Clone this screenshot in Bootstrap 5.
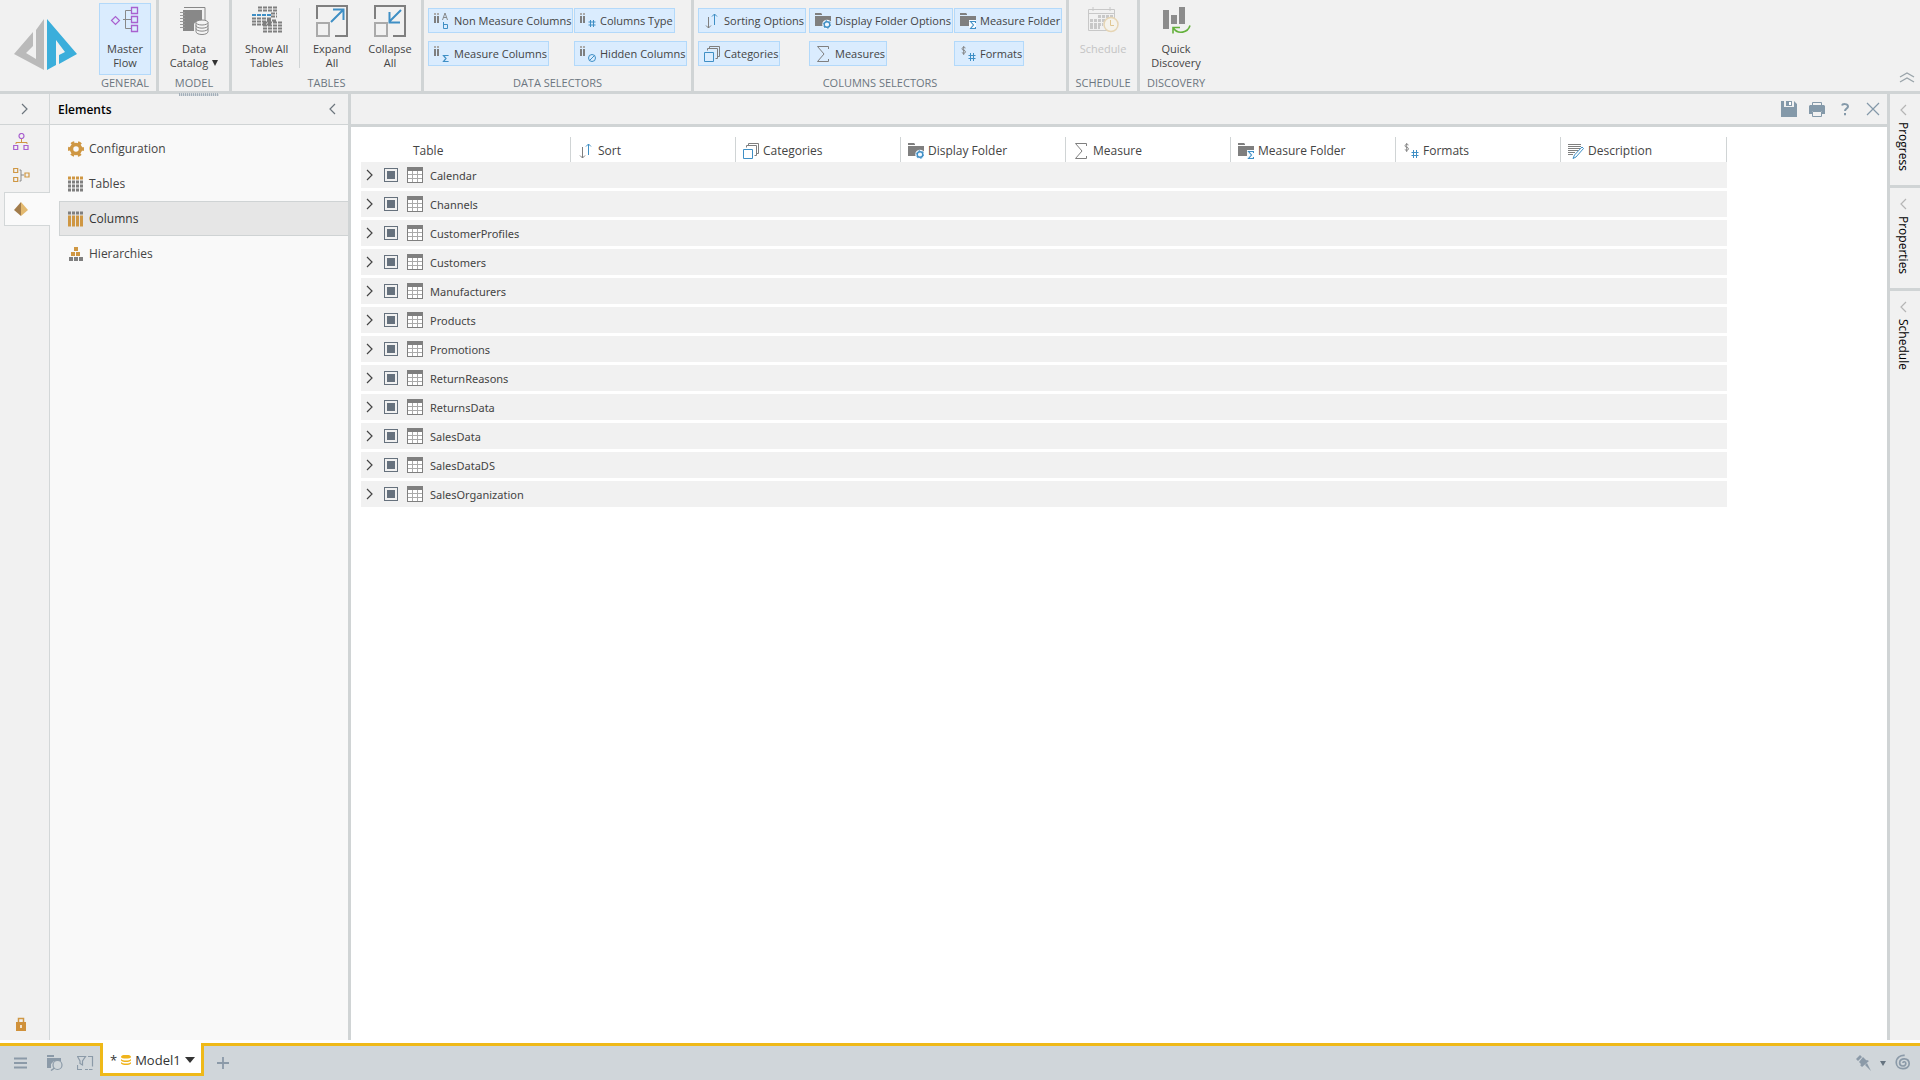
<!DOCTYPE html>
<html lang="en">
<head>
<meta charset="utf-8">
<meta name="viewport" content="width=device-width, initial-scale=1">
<title>Model1</title>
<link href="https://cdn.jsdelivr.net/npm/bootstrap@5.3.0/dist/css/bootstrap.min.css" rel="stylesheet">
<style>
  :root { --line: #d0d4d5; --panel: #f1f1f1; --grey: #7f7f7f; --blue: #3f8fc5; --gold: #cf9743; --slate: #8b9aa8; }
  body { font-family: "Open Sans", "Noto Sans", sans-serif; font-size: 12px; line-height: 14px; color: #444; background: #fff; }
  button { font: inherit; color: inherit; background: none; border: 0; padding: 0; }
  svg { display: block; flex: none; }
  a { color: inherit; text-decoration: none; }

  /* ribbon */
  .ribbon { background: var(--panel); border-bottom: 3px solid var(--line); height: 94px; font-size: 11px; }
  .ribbon-group { border-right: 3px solid var(--line); padding: 3px 5px 0; }
  .ribbon-group:last-of-type { border-right: 0; }
  .group-caption { color: #6c7680; height: 14px; margin-top: auto; margin-bottom: 1px; white-space: nowrap; }
  .brand-box { width: 94px; }
  .g-general { width: 65px; } .g-model { width: 73px; } .g-tables { width: 192px; }
  .g-data { width: 270px; } .g-columns { width: 375px; } .g-schedule { width: 71px; } .g-discovery { width: 72px; }
  .tool { min-width: 52px; height: 72px; border: 1px solid transparent; padding-top: 1px; white-space: nowrap; }
  .tool svg { margin-bottom: 5px; }
  .tool.on, .chip { background: #daecfe; border: 1px solid #b3d9fa; }
  .tool:disabled { color: #c4c4c4; }
  .tool-row { padding-left: 3px; }
  .tool-sep { width: 1px; height: 60px; background: var(--line); margin-top: 5px; }
  .chips { display: grid; gap: 8px 3px; justify-items: start; justify-content: start; padding-top: 5px; }
  .chips-2 { grid-template-columns: 143px auto; margin-left: -1px; }
  .chips-3 { grid-template-columns: 108px 142px auto; margin-left: -1px; }
  .chip { display: flex; align-items: center; gap: 4px; height: 25px; padding: 0 1px 0 5px; white-space: nowrap; }

  /* work area */
  .side-rail { width: 50px; background: var(--panel); border-right: 1px solid #d3d7d8; }
  .side-rail .rail-head { height: 31px; border-bottom: 1px solid var(--line); }
  .rail-btn { height: 33px; width: 42px; }
  .rail-tab { margin: 1px -1px 0 4px; height: 34px; padding-left: 9px; background: #fafafa; border: 1px solid #d3d7d8; border-right: 0; }
  .elements { width: 301px; background: #f9f9f9; border-right: 3px solid var(--line); }
  .elements-head { height: 31px; background: var(--panel); border-bottom: 1px solid var(--line); padding: 0 12px 0 8px; }
  .elements-head h1 { font-size: 12px; line-height: 14px; font-weight: 600; color: #000; padding-top: 2px; }
  .element-list { padding-top: 6px; }
  .element-link { height: 35px; margin-left: 9px; padding-left: 8px; gap: 5px; border: 1px solid transparent; border-right: 0; }
  .element-link.active { background: #e6e6e6; border-color: #cfd3d4; font-weight: 500; color: #333; }
  .main-head { height: 33px; background: var(--panel); border-bottom: 3px solid var(--line); padding-right: 6px; gap: 12px; }
  .main-head button { width: 16px; }
  .grid-wrap { padding: 10px 0 0 10px; }

  .model-grid { border-collapse: separate; border-spacing: 0; table-layout: fixed; width: 1366px; }
  .model-grid th { height: 25px; padding: 0 0 0 7px; border-right: 1px solid var(--line); font-weight: 500; vertical-align: middle; }
  .model-grid th:first-child { width: 210px; padding-left: 52px; }
  .model-grid th:last-child { width: 166px; }
  .model-grid th span { display: flex; align-items: center; gap: 4px; padding-top: 2px; }
  .model-grid td { height: 29px; padding: 0; background: var(--panel); border-bottom: 3px solid #fff; font-family: "Noto Sans", sans-serif; font-size: 11px; }
  .cell { display: flex; align-items: center; height: 26px; padding-left: 5px; }
  .cell input { appearance: none; width: 14px; height: 14px; margin: 0 9px 0 11px; border: 1px solid #66717d; padding: 2px; background: #66717d content-box; flex: none; }
  .cell label { margin-left: 7px; padding-top: 1px; }

  .dock { width: 33px; background: var(--panel); border-left: 3px solid var(--line); color: #000; }
  .dock-tab { border-bottom: 3px solid var(--line); padding: 10px 4px 0 0; gap: 6px; }
  .dock-tab:last-child { border-bottom: 0; }
  .dock-tab svg { color: #b5b5b5; }
  .dock-tab span { writing-mode: vertical-rl; font-weight: 500; line-height: 16px; }
  .h-94 { height: 94px; } .h-103 { height: 103px; }

  /* bottom bar */
  .tabs-bar { height: 37px; background: #d0d6da; border-top: 3px solid #efb918; margin-top: 3px; }
  .bar-tools { width: 100px; padding-left: 14px; gap: 14px; }
  .doc-tab { height: 33px; margin-top: -3px; background: #fff; border: 3px solid #efb918; border-top: 0; color: #333; padding: 3px 6px 0 7px; width: 104px; font-size: 13px; }
  .drag-grip { left: 179px; top: 93px; width: 40px; height: 3px; background: repeating-linear-gradient(90deg, #a4b0ba 0 1px, #d8dcdf 1px 2px); }
</style>
</head>
<body class="vh-100 d-flex flex-column overflow-hidden">

<svg width="0" height="0" class="position-absolute" aria-hidden="true">
  <symbol id="i-right" viewBox="0 0 7 12"><path d="M1 1l5 5-5 5" fill="none" stroke="currentColor" stroke-width="1.2"/></symbol>
  <symbol id="i-left" viewBox="0 0 7 12"><path d="M6 1L1 6l5 5" fill="none" stroke="currentColor" stroke-width="1.2"/></symbol>
  <symbol id="i-grid" viewBox="0 0 16 16"><path d="M0 0h16v16H0z" fill="#7f7f7f"/><path d="M1 4h14v11H1z" fill="#fff"/><path d="M5.500 4v11M10.500 4v11M1 7.500h14M1 11.500h14" stroke="#aaa"/></symbol>
  <symbol id="i-sort" viewBox="0 0 16 16"><path d="M4.500 4v11M2 12.500l2.500 2.500 2.500-2.500" fill="none" stroke="#7f7f7f"/><path d="M10.500 12V1M8 3.500L10.500 1 13 3.500" fill="none" stroke="#3f8fc5"/></symbol>
  <symbol id="i-cat" viewBox="0 0 16 16"><path d="M5.500 2.500v-2h10v10h-2M3.500 4.500v-2h10v10h-2" fill="none" stroke="#7f7f7f"/><path d="M.5 6.500h9v9h-9z" fill="none" stroke="#3f8fc5"/></symbol>
  <symbol id="i-fgear" viewBox="0 0 16 16"><path d="M0 0h6l1 1v1H0zM0 3h16v10H0z" fill="#7f7f7f"/><circle cx="12" cy="11.500" r="4.800" fill="#f0f7ff"/><circle cx="12" cy="11.500" r="2.800" fill="none" stroke="#3f8fc5" stroke-width="1.400"/><circle cx="12" cy="11.500" r="3.800" fill="none" stroke="#3f8fc5" stroke-dasharray="1.500 2.480"/></symbol>
  <symbol id="i-fsum" viewBox="0 0 16 16"><path d="M0 0h6l1 1v1H0zM0 3h16v10H0z" fill="#7f7f7f"/><path d="M9 7h7v9H9z" fill="#f7fbff"/><path d="M15.500 10V8.500h-5l3 3.500-3 3.500h5V14" fill="none" stroke="#3f8fc5" stroke-width="1.100"/></symbol>
  <symbol id="i-sum" viewBox="0 0 16 16"><path d="M13.500 3V.5h-11L9 8l-6.500 7.500h11V13" fill="none" stroke="#7f7f7f"/></symbol>
  <symbol id="i-fmt" viewBox="0 0 16 16"><path d="M5.500 2C4.500 1 2 1 2 2.800c0 2 3.500 1 3.500 3C5.500 7.500 3 7.800 1.800 6.500M3.700 0v9" fill="none" stroke="#7f7f7f" stroke-width=".9"/><path d="M10.500 7v8M13.500 7v8M8.500 9.500h7M8.500 12.500h7" stroke="#3f8fc5"/></symbol>
  <symbol id="i-ii" viewBox="0 0 16 16"><path d="M0 0h2v2H0zM3 0h2v2H3z" fill="#aaa"/><path d="M0 3h2v7H0zM3 3h2v7H3z" fill="#7f7f7f"/></symbol>
  <symbol id="i-desc" viewBox="0 0 16 16"><path d="M0 1.500h13M0 3.500h13M0 5.500h12M0 7.500h10M0 9.500h7M0 11.500h5" stroke="#7f7f7f"/><path d="M14 4l1.500 1.500L8 14l-3 1.500L6.500 12z" fill="#fff" stroke="#3f8fc5"/></symbol>
</svg>

<header class="ribbon d-flex flex-shrink-0">
  <a href="#" class="brand-box ribbon-group" aria-label="Home">
    <svg width="84" height="80" viewBox="5 3 84 80"><path d="M44 19v51L14 54l19-22v14l-7 7 10 6V30z" fill="#bababa"/><path d="M47 19l30 35-18 10v-9l6-3-9-12v25l-9 5z" fill="#3baedb"/></svg>
  </a>
  <section class="ribbon-group g-general d-flex flex-column align-items-center">
    <button class="tool on d-flex flex-column align-items-center"><svg width="30" height="32" viewBox="0 0 30 32"><path d="M1.500 15.500l4-4 4 4-4 4z" fill="none" stroke="#a960cf" stroke-width="1.200"/><path d="M21 5.500h-5.500v18H21M13 14.500h8" fill="none" stroke="#888"/><path d="M21.500 2.500h6v6h-6zM21.500 11.500h6v6h-6zM21.500 20.500h6v6h-6z" fill="none" stroke="#a960cf" stroke-width="1.300"/></svg>Master<br>Flow</button>
    <div class="group-caption">GENERAL</div>
  </section>
  <section class="ribbon-group g-model d-flex flex-column align-items-center">
    <button class="tool d-flex flex-column align-items-center"><svg width="30" height="32" viewBox="0 0 30 32"><path d="M5 2.500h21v19" fill="none" stroke="#888"/><path d="M4 5h19v11c-5 0-8 1-8 4v6H4z" fill="#888"/><path d="M1 7.500h5M1 10.500h5M1 13.500h5M1 16.500h5M1 19.500h5M1 22.500h5" stroke="#999"/><path d="M17 17.500v9c0 4 12 4 12 0v-9" fill="#f4f4f4" stroke="#888"/><ellipse cx="23" cy="17.500" rx="6" ry="2.500" fill="#f4f4f4" stroke="#888"/><path d="M17 20.500c0 3.500 12 3.500 12 0M17 23.500c0 3.500 12 3.500 12 0" fill="none" stroke="#888"/></svg><span>Data</span><span class="d-flex align-items-center">Catalog<svg class="m-0 ms-1" width="6" height="6"><path d="M0 0h6L3 6z" fill="#333"/></svg></span></button>
    <div class="group-caption">MODEL</div>
  </section>
  <section class="ribbon-group g-tables d-flex flex-column align-items-center">
    <div class="tool-row d-flex w-100 justify-content-between">
      <button class="tool d-flex flex-column align-items-center px-1"><svg width="32" height="32" viewBox="0 0 32 32"><path d="M7 2.500h19M7 5.500h19M16 15.500h10M1 13.500h19M1 16.500h19M1 19.500h19M20 8.500h6M20 11.500h6M12 17.500h19M12 20.500h19M12 23.500h19M12 26.500h19" stroke="#7f7f7f" stroke-width="2" stroke-dasharray="4 1"/><path d="M1 10h19" stroke="#3f8fc5" stroke-width="2" stroke-dasharray="4 1"/></svg>Show All<br>Tables</button>
      <div class="tool-sep"></div>
      <button class="tool d-flex flex-column align-items-center"><svg width="32" height="32" viewBox="0 0 32 32"><path d="M1 14V1h30v30H19" fill="none" stroke="#7f7f7f" stroke-width="2"/><path d="M1 18h12v13H1z" fill="none" stroke="#aaa" stroke-width="2"/><path d="M15 17L27 5M17 4.500h10.500V15" fill="none" stroke="#3f8fc5" stroke-width="2"/></svg>Expand<br>All</button>
      <button class="tool d-flex flex-column align-items-center"><svg width="32" height="32" viewBox="0 0 32 32"><path d="M1 14V1h30v30H19" fill="none" stroke="#7f7f7f" stroke-width="2"/><path d="M1 18h12v13H1z" fill="none" stroke="#aaa" stroke-width="2"/><path d="M27 5L15 17M15.500 7v10.500H26" fill="none" stroke="#3f8fc5" stroke-width="2"/></svg>Collapse<br>All</button>
    </div>
    <div class="group-caption">TABLES</div>
  </section>
  <section class="ribbon-group g-data d-flex flex-column">
    <div class="chips chips-2">
      <button class="chip"><svg width="16" height="16"><use href="#i-ii"/><path d="M8.500 7L11 0l2.500 7M9.500 4.500h3" fill="none" stroke="#7f7f7f" stroke-width=".9"/><path d="M9.500 9v6.500h4v-4h-4" fill="none" stroke="#3f8fc5"/></svg>Non Measure Columns</button>
      <button class="chip"><svg width="16" height="16"><use href="#i-ii"/><path d="M10.500 7v7M13.500 7v7M8.500 9h7M8.500 12h7" stroke="#3f8fc5"/></svg>Columns Type</button>
      <button class="chip"><svg width="16" height="16"><use href="#i-ii"/><path d="M14 10V9.500H9.500l2.500 3-2.500 3H14V15" fill="none" stroke="#3f8fc5" stroke-width="1.200"/></svg>Measure Columns</button>
      <button class="chip"><svg width="16" height="16"><use href="#i-ii"/><circle cx="12" cy="12" r="3.500" fill="none" stroke="#3f8fc5"/><path d="M9.500 14.500l5-5" stroke="#3f8fc5"/></svg>Hidden Columns</button>
    </div>
    <div class="group-caption text-center">DATA SELECTORS</div>
  </section>
  <section class="ribbon-group g-columns d-flex flex-column">
    <div class="chips chips-3">
      <button class="chip"><svg width="16" height="16"><use href="#i-sort"/></svg>Sorting Options</button>
      <button class="chip"><svg width="16" height="16"><use href="#i-fgear"/></svg>Display Folder Options</button>
      <button class="chip"><svg width="16" height="16"><use href="#i-fsum"/></svg>Measure Folder</button>
      <button class="chip"><svg width="16" height="16"><use href="#i-cat"/></svg>Categories</button>
      <button class="chip"><svg width="16" height="16"><use href="#i-sum"/></svg>Measures</button>
      <button class="chip"><svg width="16" height="16"><use href="#i-fmt"/></svg>Formats</button>
    </div>
    <div class="group-caption text-center">COLUMNS SELECTORS</div>
  </section>
  <section class="ribbon-group g-schedule d-flex flex-column align-items-center">
    <button class="tool d-flex flex-column align-items-center" disabled><svg width="32" height="32" viewBox="0 0 32 32"><path d="M1.500 4.500h26v21h-26zM1.500 8.500h26M6 2v4M23 2v4" fill="none" stroke="#c8c8c8"/><path d="M11 11.500h15M3 15.500h23M3 19.500h13M3 22.500h10" stroke="#c8c8c8" stroke-width="3" stroke-dasharray="3 1"/><circle cx="24" cy="19.500" r="7" fill="#f5f3ec" stroke="#e6d5b4" stroke-width="1.500"/><path d="M23.500 15v5.500H27" fill="none" stroke="#e0c692"/></svg>Schedule</button>
    <div class="group-caption">SCHEDULE</div>
  </section>
  <section class="ribbon-group g-discovery d-flex flex-column align-items-center">
    <button class="tool d-flex flex-column align-items-center"><svg width="30" height="32" viewBox="0 0 30 32"><path d="M2 5h6v19H2zM10 10h6v9h-6zM18 2h6v17h-6z" fill="#8c8c8c"/><path d="M12 28.500v-6h7M12 22.500c5 8 15 5 17-2" fill="none" stroke="#64b13c" stroke-width="1.600"/></svg>Quick<br>Discovery</button>
    <div class="group-caption">DISCOVERY</div>
  </section>
  <button class="ms-auto mt-auto me-1 pb-2" aria-label="Collapse ribbon"><svg width="18" height="12"><path d="M2 6l7-4 7 4M2 11l7-4 7 4" fill="none" stroke="#9aa4aa" stroke-width="1.400"/></svg></button>
</header>
<div class="drag-grip position-absolute"></div>

<main class="d-flex flex-grow-1 overflow-hidden">
  <nav class="side-rail d-flex flex-column flex-shrink-0" aria-label="Views">
    <button class="rail-head d-flex align-items-center justify-content-center" aria-label="Expand"><svg width="7" height="12" class="text-secondary"><use href="#i-right"/></svg></button>
    <button class="rail-btn d-flex align-items-center justify-content-center" aria-label="Flow"><svg width="16" height="17"><circle cx="8.500" cy="3" r="2.500" fill="none" stroke="#a960cf" stroke-width="1.200"/><path d="M3 11V9.500h11V11M8.500 6v3" fill="none" stroke="#cf9743"/><path d="M.7 12.500h4v4h-4zM11 12.500h4v4h-4z" fill="none" stroke="#a960cf" stroke-width="1.200"/></svg></button>
    <button class="rail-btn d-flex align-items-center justify-content-center" aria-label="Joins"><svg width="17" height="16"><path d="M.7 1.500h4v4h-4zM.7 10.500h4v4h-4zM12 6h4v4h-4z" fill="none" stroke="#cf9743" stroke-width="1.200"/><path d="M6.500 3H8v11H6.500M8 8h3" fill="none" stroke="#888"/></svg></button>
    <button class="rail-tab d-flex align-items-center" aria-label="Model"><svg width="14" height="14"><path d="M7 0v14L0 8z" fill="#a27c4b"/><path d="M7 0l7 8-7 6z" fill="#e3b96f"/></svg></button>
    <button class="rail-btn mt-auto d-flex align-items-center justify-content-center" aria-label="Lock"><svg width="10" height="14"><path d="M2.500 6V1.500h5V6" fill="none" stroke="#cf9743" stroke-width="1.500"/><path d="M0 5h10v9H0z" fill="#d0913a"/><path d="M5 8v3" stroke="#fff" stroke-width="1.500"/></svg></button>
  </nav>

  <aside class="elements flex-shrink-0">
    <div class="elements-head d-flex align-items-center justify-content-between"><h1 class="m-0">Elements</h1><button aria-label="Collapse"><svg width="7" height="12" class="text-secondary"><use href="#i-left"/></svg></button></div>
    <nav class="element-list" aria-label="Elements">
      <a href="#" class="element-link d-flex align-items-center"><svg width="16" height="16"><circle cx="8" cy="8" r="4.500" fill="none" stroke="#cf9743" stroke-width="3.500"/><circle cx="8" cy="8" r="6.800" fill="none" stroke="#cf9743" stroke-width="2.400" stroke-dasharray="3.500 3.620" stroke-dashoffset="-1.800" transform="rotate(-30 8 8)"/></svg>Configuration</a>
      <a href="#" class="element-link d-flex align-items-center"><svg width="16" height="16"><path d="M0 2h16" stroke="#cf9743" stroke-width="3" stroke-dasharray="3 1"/><path d="M0 6h16M0 10h16M0 14h16" stroke="#7f7f7f" stroke-width="3" stroke-dasharray="3 1"/></svg>Tables</a>
      <a href="#" class="element-link active d-flex align-items-center"><svg width="16" height="16"><path d="M0 2h16" stroke="#7f7f7f" stroke-width="3" stroke-dasharray="3 1"/><path d="M0 10h16" stroke="#cf9743" stroke-width="11" stroke-dasharray="3 1"/></svg>Columns</a>
      <a href="#" class="element-link d-flex align-items-center"><svg width="16" height="16"><path d="M6 1h4v4H6zM3 6h4v4H3zM8 6h4v4H8z" fill="#cf9743"/><path d="M1 11h4v4H1zM6 11h4v4H6zM11 11h4v4h-4z" fill="#7f7f7f"/></svg>Hierarchies</a>
    </nav>
  </aside>

  <section class="flex-grow-1 overflow-hidden">
    <div class="main-head d-flex align-items-center justify-content-end">
      <button aria-label="Save"><svg width="16" height="16"><path d="M0 0h3v6h10V0l3 3v13H0zM5 0h6v5H5z" fill="#8499a9"/><path d="M8 1h2v3H8z" fill="#fff"/></svg></button>
      <button aria-label="Print"><svg width="16" height="16"><path d="M3.500 4V1.500h9V4" fill="none" stroke="#8499a9"/><path d="M0 5l1-1h14l1 1v8h-3v-3H3v3H0z" fill="#8499a9"/><path d="M3.500 10.500h9v5h-9z" fill="none" stroke="#8499a9"/></svg></button>
      <button aria-label="Help"><svg width="16" height="16"><path d="M5 4.500C5.500 2.500 11 2.500 11 5.500c0 2-3 2-3 4.500M8 12v2.200" fill="none" stroke="#8499a9" stroke-width="2"/></svg></button>
      <button aria-label="Close"><svg width="16" height="16"><path d="M2 2l12 12M14 2L2 14" stroke="#8499a9" stroke-width="1.200"/></svg></button>
    </div>
    <div class="grid-wrap">
      <table class="model-grid">
        <thead><tr>
          <th scope="col"><span>Table</span></th>
          <th scope="col"><span><svg width="16" height="16"><use href="#i-sort"/></svg>Sort</span></th>
          <th scope="col"><span><svg width="16" height="16"><use href="#i-cat"/></svg>Categories</span></th>
          <th scope="col"><span><svg width="16" height="16"><use href="#i-fgear"/></svg>Display Folder</span></th>
          <th scope="col"><span><svg width="16" height="16"><use href="#i-sum"/></svg>Measure</span></th>
          <th scope="col"><span><svg width="16" height="16"><use href="#i-fsum"/></svg>Measure Folder</span></th>
          <th scope="col"><span><svg width="16" height="16"><use href="#i-fmt"/></svg>Formats</span></th>
          <th scope="col"><span><svg width="16" height="16"><use href="#i-desc"/></svg>Description</span></th>
        </tr></thead>
        <tbody>
          <tr><td colspan="8"><div class="cell"><button aria-label="Expand Calendar"><svg width="7" height="12"><use href="#i-right"/></svg></button><input type="checkbox" id="t1"><svg width="16" height="16"><use href="#i-grid"/></svg><label for="t1">Calendar</label></div></td></tr>
          <tr><td colspan="8"><div class="cell"><button aria-label="Expand Channels"><svg width="7" height="12"><use href="#i-right"/></svg></button><input type="checkbox" id="t2"><svg width="16" height="16"><use href="#i-grid"/></svg><label for="t2">Channels</label></div></td></tr>
          <tr><td colspan="8"><div class="cell"><button aria-label="Expand CustomerProfiles"><svg width="7" height="12"><use href="#i-right"/></svg></button><input type="checkbox" id="t3"><svg width="16" height="16"><use href="#i-grid"/></svg><label for="t3">CustomerProfiles</label></div></td></tr>
          <tr><td colspan="8"><div class="cell"><button aria-label="Expand Customers"><svg width="7" height="12"><use href="#i-right"/></svg></button><input type="checkbox" id="t4"><svg width="16" height="16"><use href="#i-grid"/></svg><label for="t4">Customers</label></div></td></tr>
          <tr><td colspan="8"><div class="cell"><button aria-label="Expand Manufacturers"><svg width="7" height="12"><use href="#i-right"/></svg></button><input type="checkbox" id="t5"><svg width="16" height="16"><use href="#i-grid"/></svg><label for="t5">Manufacturers</label></div></td></tr>
          <tr><td colspan="8"><div class="cell"><button aria-label="Expand Products"><svg width="7" height="12"><use href="#i-right"/></svg></button><input type="checkbox" id="t6"><svg width="16" height="16"><use href="#i-grid"/></svg><label for="t6">Products</label></div></td></tr>
          <tr><td colspan="8"><div class="cell"><button aria-label="Expand Promotions"><svg width="7" height="12"><use href="#i-right"/></svg></button><input type="checkbox" id="t7"><svg width="16" height="16"><use href="#i-grid"/></svg><label for="t7">Promotions</label></div></td></tr>
          <tr><td colspan="8"><div class="cell"><button aria-label="Expand ReturnReasons"><svg width="7" height="12"><use href="#i-right"/></svg></button><input type="checkbox" id="t8"><svg width="16" height="16"><use href="#i-grid"/></svg><label for="t8">ReturnReasons</label></div></td></tr>
          <tr><td colspan="8"><div class="cell"><button aria-label="Expand ReturnsData"><svg width="7" height="12"><use href="#i-right"/></svg></button><input type="checkbox" id="t9"><svg width="16" height="16"><use href="#i-grid"/></svg><label for="t9">ReturnsData</label></div></td></tr>
          <tr><td colspan="8"><div class="cell"><button aria-label="Expand SalesData"><svg width="7" height="12"><use href="#i-right"/></svg></button><input type="checkbox" id="t10"><svg width="16" height="16"><use href="#i-grid"/></svg><label for="t10">SalesData</label></div></td></tr>
          <tr><td colspan="8"><div class="cell"><button aria-label="Expand SalesDataDS"><svg width="7" height="12"><use href="#i-right"/></svg></button><input type="checkbox" id="t11"><svg width="16" height="16"><use href="#i-grid"/></svg><label for="t11">SalesDataDS</label></div></td></tr>
          <tr><td colspan="8"><div class="cell"><button aria-label="Expand SalesOrganization"><svg width="7" height="12"><use href="#i-right"/></svg></button><input type="checkbox" id="t12"><svg width="16" height="16"><use href="#i-grid"/></svg><label for="t12">SalesOrganization</label></div></td></tr>
        </tbody>
      </table>
    </div>
  </section>

  <aside class="dock flex-shrink-0 d-flex flex-column">
    <button class="dock-tab h-94 d-flex flex-column align-items-center"><svg width="7" height="12"><use href="#i-left"/></svg><span>Progress</span></button>
    <button class="dock-tab h-103 d-flex flex-column align-items-center"><svg width="7" height="12"><use href="#i-left"/></svg><span>Properties</span></button>
    <button class="dock-tab d-flex flex-column align-items-center"><svg width="7" height="12"><use href="#i-left"/></svg><span>Schedule</span></button>
  </aside>
</main>

<footer class="tabs-bar d-flex flex-shrink-0">
  <div class="bar-tools d-flex align-items-center">
    <button class="me-1" aria-label="Menu"><svg width="13" height="12"><path d="M0 1.500h13M0 6h13M0 10.500h13" stroke="#8b9aa8" stroke-width="2"/></svg></button>
    <button aria-label="Browse"><svg width="18" height="16"><path d="M2 0h7v2H2zM2 3h14v3H9l-3 3v4H2z" fill="#8b9aa8"/><circle cx="12.500" cy="10" r="4.500" fill="#d0d6da" stroke="#8b9aa8" stroke-width="1.200"/><path d="M9.500 13L6 15.500" stroke="#8b9aa8" stroke-width="1.500"/></svg></button>
    <button aria-label="Selection"><svg width="17" height="16"><path d="M.5 1.500h8L5.500 6v4L3 8.500V6zM11 1.500h4.500v10M.5 10v4.500H5M8 14.500h3M12 14.500h3.500" fill="none" stroke="#8b9aa8" stroke-width="1.200"/></svg></button>
  </div>
  <button class="doc-tab d-flex align-items-center gap-1"><span>*</span><svg width="10" height="10"><path d="M0 2c0-3 10-3 10 0 0 2-10 2-10 0zM0 4c2 2 8 2 10 0v1.500c-2 2-8 2-10 0zM0 7c2 2 8 2 10 0v1.500c-2 2-8 2-10 0z" fill="#f0b41c"/></svg><span>Model1</span><svg class="ms-auto" width="10" height="6"><path d="M0 0h10L5 6z" fill="#333"/></svg></button>
  <button class="ms-2 ps-1 align-self-center" aria-label="New"><svg width="14" height="12"><path d="M7 0v12M1 6h12" stroke="#8b9aa8" stroke-width="1.800"/></svg></button>
  <div class="ms-auto d-flex align-items-center pe-2 gap-2">
    <button aria-label="Pin"><svg width="17" height="16"><path d="M1 4l4-4 2 2-4 4zM4 7l4-5 4 4-5 4z" fill="#8b9aa8"/><path d="M5 10l7-5 2 1-7 6zM10 10l2-2 4 8z" fill="#8b9aa8"/></svg></button>
    <button aria-label="More"><svg width="6" height="5"><path d="M0 0h6L3 5z" fill="#667480"/></svg></button>
    <button aria-label="Activity"><svg width="18" height="18" viewBox="0 0 16 16"><path d="M8 8c0-1.800 2.500-1.300 2.500.5 0 3-5.500 3-5.500-.8 0-4.700 8.500-4.700 8.500 1 0 6-11.500 6-11.500-1.200C2 3 6 .8 9.500 1.200" fill="none" stroke="#8b9aa8" stroke-width="1.500"/></svg></button>
  </div>
</footer>
<script src="https://cdn.jsdelivr.net/npm/bootstrap@5.3.0/dist/js/bootstrap.bundle.min.js"></script>
</body>
</html>
